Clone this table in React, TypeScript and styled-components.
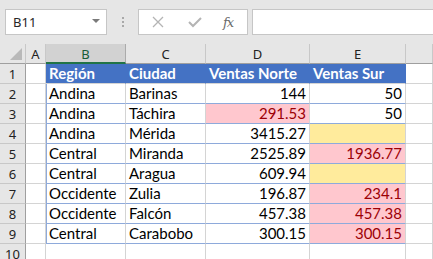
import React from "react";
import styled, { createGlobalStyle } from "styled-components";

const Global = createGlobalStyle`
  html, body { margin: 0; padding: 0; background: #ffffff; overflow: hidden; }
  body { width: 433px; height: 259px; }
`;

const Page = styled.div`
  width: 433px;
  height: 259px;
  overflow: hidden;
  display: flex;
  flex-direction: column;
  background: #fff;
`;

const Toolbar = styled.div`
  height: 44px;
  flex: none;
  background: #e6e6e6;
  display: flex;
  align-items: flex-start;
  padding: 9px 0 0 5px;
  box-sizing: border-box;
`;

const NameBox = styled.div`
  width: 102px;
  height: 26px;
  box-sizing: border-box;
  background: #fff;
  border: 1px solid #c6c6c6;
  display: flex;
  align-items: center;
  justify-content: space-between;
  padding: 0 6px 0 7px;
  font-family: "Noto Sans", "Open Sans", sans-serif;
  font-size: 13px;
  color: #262626;
`;

const Caret = styled.span`
  width: 0;
  height: 0;
  border-left: 4px solid transparent;
  border-right: 4px solid transparent;
  border-top: 4px solid #7a7a7a;
  margin-top: -2px;
`;

const Grip = styled.div`
  width: 31px;
  height: 26px;
  display: flex;
  flex-direction: column;
  align-items: center;
  justify-content: center;
  gap: 2px;
  & > span { width: 2px; height: 2px; background: #a8a8a8; }
`;

const FxBox = styled.div`
  width: 110px;
  height: 26px;
  box-sizing: border-box;
  background: #fff;
  border: 1px solid #c6c6c6;
  display: flex;
  align-items: center;
  padding-left: 13px;
  gap: 0;
`;

const IconSlot = styled.div<{ $w: number }>`
  width: ${(p) => p.$w}px;
  height: 24px;
  display: flex;
  align-items: center;
  justify-content: flex-start;
`;

const FxText = styled.span`
  font-family: "DejaVu Serif", "Liberation Serif", serif;
  font-style: italic;
  font-size: 13px;
  color: #6a6a6a;
  letter-spacing: -1px;
`;

const FormulaInput = styled.div`
  margin-left: 4px;
  flex: 1;
  height: 26px;
  box-sizing: border-box;
  background: #fff;
  border: 1px solid #c6c6c6;
  border-right: none;
`;

const Sheet = styled.div`
  display: grid;
  grid-template-columns: 26px 20px 80px 80px 104px 96px 1fr;
  grid-template-rows: 20px repeat(10, 20px);
  font-family: "Lato", "Liberation Sans", sans-serif;
`;

const Corner = styled.div`
  background: #e6e6e6;
  border-right: 1px solid #c8c8c8;
  border-bottom: 1px solid #9f9f9f;
  box-sizing: border-box;
  position: relative;
  &::after {
    content: "";
    position: absolute;
    right: 3px;
    bottom: 3px;
    width: 0;
    height: 0;
    border-left: 12px solid transparent;
    border-bottom: 12px solid #b9b9b9;
  }
`;

const ColHead = styled.div<{ $sel?: boolean }>`
  background: ${(p) => (p.$sel ? "#d2d2d2" : "#e6e6e6")};
  border-right: 1px solid ${(p) => (p.$sel ? "#ababab" : "#c8c8c8")};
  border-bottom: ${(p) => (p.$sel ? "2px solid #217346" : "1px solid #9f9f9f")};
  box-sizing: border-box;
  display: flex;
  align-items: center;
  justify-content: center;
  font-family: "Noto Sans", "Open Sans", sans-serif;
  font-size: 13px;
  color: ${(p) => (p.$sel ? "#185c37" : "#222")};
  padding-top: ${(p) => (p.$sel ? "1px" : "0")};
`;

const RowHead = styled.div`
  background: #e6e6e6;
  border-right: 1px solid #9f9f9f;
  border-bottom: 1px solid #c8c8c8;
  box-sizing: border-box;
  display: flex;
  align-items: center;
  justify-content: center;
  font-family: "Noto Sans", "Open Sans", sans-serif;
  font-size: 13px;
  color: #222;
`;

type Fill = "none" | "head" | "bad" | "neutral";

const Cell = styled.div<{
  $fill?: Fill;
  $right?: boolean;
  $tb?: boolean;
  $tl?: boolean;
}>`
  box-sizing: border-box;
  border-right: 1px solid ${(p) => (p.$fill === "head" ? "#4472c4" : "#d4d4d4")};
  border-bottom: 1px solid ${(p) => (p.$tb ? "#8eaadb" : "#d4d4d4")};
  ${(p) => (p.$tl ? "box-shadow: inset 1px 0 0 #8eaadb;" : "")}
  background: ${(p) =>
    p.$fill === "head"
      ? "#4472c4"
      : p.$fill === "bad"
      ? "#ffc7ce"
      : p.$fill === "neutral"
      ? "#ffeb9c"
      : "#fff"};
  color: ${(p) =>
    p.$fill === "head" ? "#fff" : p.$fill === "bad" ? "#9c0006" : "#000"};
  font-weight: ${(p) => (p.$fill === "head" ? 700 : 400)};
  font-size: 15px;
  display: flex;
  align-items: center;
  justify-content: ${(p) => (p.$right ? "flex-end" : "flex-start")};
  padding: 0 3px 1px 3px;
  white-space: nowrap;
  overflow: visible;
`;

type Row = [string, string, string, string];
type Fills = [Fill, Fill];

const data: { v: Row; f: Fills }[] = [
  { v: ["Andina", "Barinas", "144", "50"], f: ["none", "none"] },
  { v: ["Andina", "Táchira", "291.53", "50"], f: ["bad", "none"] },
  { v: ["Andina", "Mérida", "3415.27", ""], f: ["none", "neutral"] },
  { v: ["Central", "Miranda", "2525.89", "1936.77"], f: ["none", "bad"] },
  { v: ["Central", "Aragua", "609.94", ""], f: ["none", "neutral"] },
  { v: ["Occidente", "Zulia", "196.87", "234.1"], f: ["none", "bad"] },
  { v: ["Occidente", "Falcón", "457.38", "457.38"], f: ["none", "bad"] },
  { v: ["Central", "Carabobo", "300.15", "300.15"], f: ["none", "bad"] },
];

const XIcon = () => (
  <svg width="12" height="12" viewBox="0 0 12 12">
    <path d="M1 1 L11 11 M11 1 L1 11" stroke="#b4b4b4" strokeWidth="1.3" fill="none" />
  </svg>
);

const CheckIcon = () => (
  <svg width="14" height="12" viewBox="0 0 14 12">
    <path d="M1 6 L5 10 L13 2" stroke="#b4b4b4" strokeWidth="2" fill="none" />
  </svg>
);

export default function App() {
  const cols = ["A", "B", "C", "D", "E", ""];
  return (
    <Page>
      <Global />
      <Toolbar>
        <NameBox>
          <span>B11</span>
          <Caret />
        </NameBox>
        <Grip>
          <span />
          <span />
          <span />
        </Grip>
        <FxBox>
          <IconSlot $w={36}>
            <XIcon />
          </IconSlot>
          <IconSlot $w={35}>
            <CheckIcon />
          </IconSlot>
          <IconSlot $w={20}>
            <FxText>fx</FxText>
          </IconSlot>
        </FxBox>
        <FormulaInput />
      </Toolbar>
      <Sheet>
        <Corner />
        {cols.map((c, i) => (
          <ColHead key={i} $sel={c === "B"}>
            {c}
          </ColHead>
        ))}
        <RowHead>1</RowHead>
        <Cell />
        <Cell $fill="head">Región</Cell>
        <Cell $fill="head">Ciudad</Cell>
        <Cell $fill="head">Ventas Norte</Cell>
        <Cell $fill="head">Ventas Sur</Cell>
        <Cell />
        {data.map((r, i) => (
          <React.Fragment key={i}>
            <RowHead>{i + 2}</RowHead>
            <Cell />
            <Cell $tb $tl>{r.v[0]}</Cell>
            <Cell $tb>{r.v[1]}</Cell>
            <Cell $tb $right $fill={r.f[0]}>
              {r.v[2]}
            </Cell>
            <Cell $tb $right $fill={r.f[1]}>
              {r.v[3]}
            </Cell>
            <Cell />
          </React.Fragment>
        ))}
        <RowHead>10</RowHead>
        {cols.map((_, i) => (
          <Cell key={i} />
        ))}
      </Sheet>
    </Page>
  );
}
